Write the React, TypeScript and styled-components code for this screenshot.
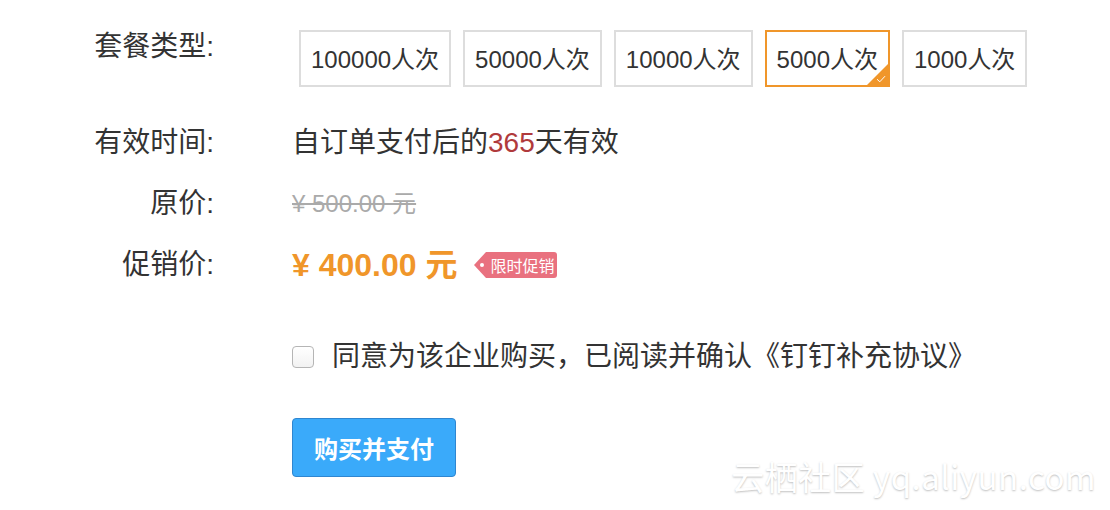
import React, { useState } from 'react';
import styled, { createGlobalStyle } from 'styled-components';

const GlobalStyle = createGlobalStyle`
  html, body {
    margin: 0;
    padding: 0;
    background: #fff;
  }
  body {
    font-family: 'Liberation Sans', 'Noto Sans CJK SC', sans-serif;
    color: #333;
  }
`;

const Page = styled.div`
  position: relative;
  width: 1110px;
  height: 510px;
  overflow: hidden;
`;

const Form = styled.div`
  display: flex;
  flex-direction: column;
`;

const Row = styled.div<{ $top: number; $align?: string }>`
  display: grid;
  grid-template-columns: 214px 1fr;
  column-gap: 78px;
  align-items: ${(p) => p.$align || 'center'};
  margin-top: ${(p) => p.$top}px;
  min-height: 34px;
`;

const Label = styled.div`
  text-align: right;
  font-size: 28px;
  line-height: 34px;
  color: #333;
`;

const Options = styled.div`
  display: flex;
  gap: 12px;
  margin-left: 7px;
`;

const Option = styled.div<{ $active?: boolean }>`
  position: relative;
  height: 57px;
  box-sizing: border-box;
  padding: 0 10px 3px;
  display: flex;
  align-items: center;
  font-size: 24px;
  color: #333;
  border: 2px solid ${(p) => (p.$active ? '#f0962a' : '#dddddd')};
  overflow: hidden;
  cursor: pointer;
`;

const Corner = styled.span`
  position: absolute;
  right: 0;
  bottom: 0;
  width: 0;
  height: 0;
  border-style: solid;
  border-width: 0 0 21px 21px;
  border-color: transparent transparent #f0962a transparent;
`;

const Check = styled.svg`
  position: absolute;
  right: 2px;
  bottom: 2px;
`;

const Text = styled.div`
  font-size: 28px;
  line-height: 34px;
  color: #333;
`;

const Days = styled.span`
  color: #b03a3c;
`;

const OldPrice = styled.div`
  font-size: 24px;
  line-height: 34px;
  color: #aaa;
  text-decoration: line-through;
`;

const PriceLine = styled.div`
  display: flex;
  align-items: center;
  gap: 17px;
`;

const Price = styled.div`
  font-size: 32px;
  font-weight: bold;
  color: #f0962a;
  line-height: 34px;
`;

const Tag = styled.span`
  position: relative;
  display: inline-flex;
  align-items: center;
  height: 26px;
  padding: 0 3px 0 4px;
  margin-left: 12px;
  background: #e9717f;
  color: #fff;
  font-size: 16px;
  border-radius: 0 3px 3px 0;

  &:before {
    content: '';
    position: absolute;
    left: -12px;
    top: 0;
    border-style: solid;
    border-width: 13px 12px 13px 0;
    border-color: transparent #e9717f transparent transparent;
  }

  &:after {
    content: '';
    position: absolute;
    left: -6px;
    top: 11px;
    width: 4px;
    height: 4px;
    border-radius: 50%;
    background: #fff;
  }
`;

const Agree = styled.label`
  display: flex;
  align-items: center;
  gap: 18px;
  font-size: 28px;
  line-height: 34px;
  color: #333;
  cursor: pointer;
`;

const Box = styled.span`
  flex: none;
  width: 22px;
  height: 22px;
  box-sizing: border-box;
  border: 1px solid #b5b5b5;
  border-radius: 4px;
  background: linear-gradient(#fff, #f2f2f2);
`;

const PayButton = styled.button`
  width: 164px;
  height: 59px;
  border: 1px solid #2f86d0;
  border-radius: 4px;
  background: #3aaafa;
  color: #fff;
  font-family: 'Liberation Sans', 'Noto Sans CJK SC', sans-serif;
  font-size: 24px;
  font-weight: bold;
  cursor: pointer;
`;

const Watermark = styled.div`
  position: absolute;
  right: 14px;
  bottom: 10px;
  font-family: 'Noto Sans CJK SC', sans-serif;
  font-size: 33px;
  color: #fff;
  letter-spacing: 0.5px;
  text-shadow: 0 1px 2px rgba(0, 0, 0, 0.25);
`;

const packages = ['100000人次', '50000人次', '10000人次', '5000人次', '1000人次'];

const App: React.FC = () => {
  const [active, setActive] = useState(3);

  return (
    <Page>
      <GlobalStyle />
      <Form>
        <Row $top={30} $align="start">
          <Label>套餐类型:</Label>
          <Options>
            {packages.map((p, i) => (
              <Option key={p} $active={i === active} onClick={() => setActive(i)}>
                {p}
                {i === active && (
                  <>
                    <Corner />
                    <Check width="10" height="8" viewBox="0 0 10 8">
                      <path d="M1 4.2 L3.8 6.8 L9 1.2" fill="none" stroke="#fff" strokeWidth="1" />
                    </Check>
                  </>
                )}
              </Option>
            ))}
          </Options>
        </Row>

        <Row $top={39}>
          <Label>有效时间:</Label>
          <Text>
            自订单支付后的<Days>365</Days>天有效
          </Text>
        </Row>

        <Row $top={27}>
          <Label>原价:</Label>
          <OldPrice>¥ 500.00 元</OldPrice>
        </Row>

        <Row $top={27}>
          <Label>促销价:</Label>
          <PriceLine>
            <Price>¥ 400.00 元</Price>
            <Tag>限时促销</Tag>
          </PriceLine>
        </Row>

        <Row $top={58}>
          <span />
          <Agree>
            <Box />
            同意为该企业购买，已阅读并确认《钉钉补充协议》
          </Agree>
        </Row>

        <Row $top={44}>
          <span />
          <div>
            <PayButton>购买并支付</PayButton>
          </div>
        </Row>
      </Form>
      <Watermark>云栖社区 yq.aliyun.com</Watermark>
    </Page>
  );
};

export default App;
